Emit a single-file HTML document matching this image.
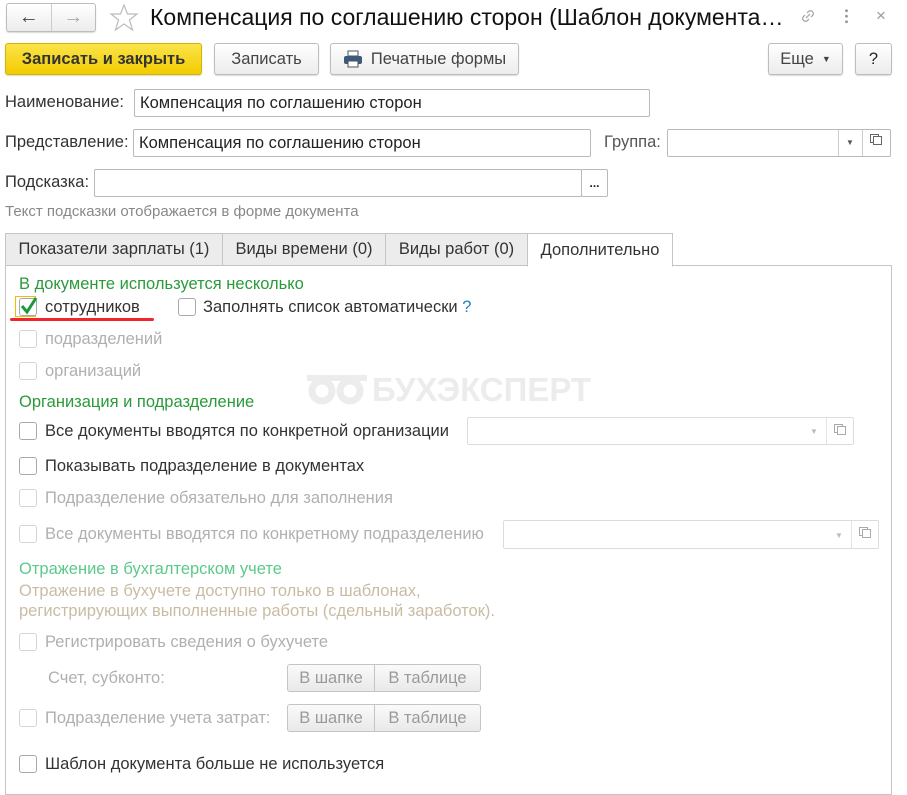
<!DOCTYPE html>
<html><head><meta charset="utf-8"><style>
*{box-sizing:border-box;margin:0;padding:0}
body{width:907px;height:784px;background:#fff;font-family:"Liberation Sans",Arial,sans-serif;font-size:16.5px;color:#333;position:relative;overflow:hidden}
.a{position:absolute;white-space:nowrap;line-height:18px}
.btn{position:absolute;border:1px solid #bdbdbd;border-radius:3px;background:linear-gradient(#fff,#ececec);box-shadow:0 1px 1px rgba(0,0,0,.15);display:flex;align-items:center;justify-content:center;color:#444}
.inp{position:absolute;border:1px solid #b9b9b9;border-radius:2px;background:#fff;padding-left:5px;display:flex;align-items:center;color:#222}
.cb{position:absolute;width:18px;height:18px;border:1px solid #a9a9a9;border-radius:3px;background:#fff}
.cb.d{border-color:#d4d4d4}
.dis{color:#b0b0b0}
.g{color:#2a9a3a}
.tab{position:absolute;top:233px;height:33px;border:1px solid #c4c4c4;background:#ececec;display:flex;align-items:center;justify-content:center;color:#333}
.seg{position:absolute;height:28px;border:1px solid #c4c4c4;border-radius:3px;background:linear-gradient(#fafafa,#e9e9e9);display:flex;color:#9a9a9a}
.seg span{display:flex;align-items:center;justify-content:center}
</style></head><body>
<div class="btn" style="left:6px;top:3px;width:90px;height:29px;justify-content:flex-start">
<div style="width:44px;text-align:center;font-size:20px;color:#444;font-weight:bold">&#8592;</div>
<div style="width:1px;height:27px;background:#ccc"></div>
<div style="width:44px;text-align:center;font-size:20px;color:#aaa;font-weight:bold">&#8594;</div></div>
<svg class="a" style="left:109px;top:3px" width="30" height="29" viewBox="0 0 30 29"><polygon points="15,2 18.5,11 28,11 20.5,17 23.5,27 15,21 6.5,27 9.5,17 2,11 11.5,11" fill="none" stroke="#bbb" stroke-width="1.2"/></svg>
<div class="a" style="left:150px;top:5px;font-size:23px;line-height:24px;color:#111">Компенсация по соглашению сторон (Шаблон документа…</div>
<svg class="a" style="left:798px;top:6px" width="20" height="20" viewBox="0 0 20 20"><path d="M8 12l4-4M7 9l-2 2a3 3 0 004 4l2-2M13 11l2-2a3 3 0 00-4-4l-2 2" fill="none" stroke="#aaa" stroke-width="1.3"/></svg>
<div class="a" style="left:845px;top:8px;width:3px;height:16px;background:radial-gradient(circle,#999 1.3px,transparent 1.6px) 0 0/3px 5.5px"></div>
<div class="a" style="left:876px;top:7px;font-size:17px;color:#999">×</div>
<div class="btn" style="left:5px;top:43px;width:197px;height:32px;background:linear-gradient(#fbe34a,#f2cc00);border-color:#d6b300;font-weight:bold;color:#333">Записать и закрыть</div>
<div class="btn" style="left:214px;top:43px;width:105px;height:32px">Записать</div>
<div class="btn" style="left:330px;top:43px;width:189px;height:32px"><svg width="20" height="18" viewBox="0 0 20 18" style="margin-right:8px"><rect x="5" y="1" width="10" height="5" fill="#fff" stroke="#456" /><rect x="1" y="6" width="18" height="8" rx="2" fill="#3f5a78"/><rect x="5" y="11" width="10" height="6" fill="#fff" stroke="#456"/></svg>Печатные формы</div>
<div class="btn" style="left:768px;top:43px;width:75px;height:32px">Еще <span style="font-size:9px;margin-left:8px">▼</span></div>
<div class="btn" style="left:855px;top:43px;width:37px;height:32px;color:#222">?</div>
<div class="a" style="left:5px;top:93px">Наименование:</div>
<div class="inp" style="left:134px;top:89px;width:516px;height:28px">Компенсация по соглашению сторон</div>
<div class="a" style="left:5px;top:133px">Представление:</div>
<div class="inp" style="left:133px;top:129px;width:458px;height:28px">Компенсация по соглашению сторон</div>
<div class="a" style="left:604px;top:133px;color:#555">Группа:</div>
<div class="inp" style="left:667px;top:129px;width:224px;height:28px"></div>
<div class="a" style="left:838px;top:130px;width:1px;height:26px;background:#ccc"></div>
<div class="a" style="left:862px;top:130px;width:1px;height:26px;background:#ccc"></div>
<div class="a" style="left:846px;top:134px;font-size:8px;color:#555">▼</div>
<div class="a" style="left:870px;top:134px;width:9px;height:9px;border:1px solid #666"></div><div class="a" style="left:873px;top:136px;width:9px;height:9px;border:1px solid #666;background:#fff"></div>
<div class="a" style="left:5px;top:173px">Подсказка:</div>
<div class="inp" style="left:94px;top:169px;width:488px;height:28px"></div>
<div class="inp" style="left:581px;top:169px;width:27px;height:28px;padding:0;justify-content:center;font-weight:bold;font-size:12px">...</div>
<div class="a" style="left:5px;top:203px;font-size:15px;color:#888">Текст подсказки отображается в форме документа</div>
<div class="a" style="left:5px;top:265px;width:887px;height:530px;border:1px solid #c4c4c4"></div>
<div class="tab" style="left:5px;width:218px">Показатели зарплаты (1)</div>
<div class="tab" style="left:222px;width:164px">Виды времени (0)</div>
<div class="tab" style="left:385px;width:143px">Виды работ (0)</div>
<div class="tab" style="left:527px;width:146px;background:#fff;border-bottom-color:#fff;height:34px">Дополнительно</div>
<svg class="a" style="left:305px;top:374px" width="70" height="32" viewBox="0 0 70 32"><circle cx="17" cy="17" r="10" fill="none" stroke="#ececec" stroke-width="7"/><circle cx="45" cy="17" r="10" fill="none" stroke="#ececec" stroke-width="7"/><path d="M2 4h60" stroke="#ececec" stroke-width="6"/></svg>
<div class="a" style="left:372px;top:374px;font-size:33px;line-height:32px;font-weight:bold;color:#ececec">БУХЭКСПЕРТ</div>
<div class="a g" style="left:19px;top:275px">В документе используется несколько</div>
<div class="a" style="left:15px;top:296px;width:21px;height:21px;border:1px solid #f0c000"></div>
<div class="cb" style="left:19px;top:298px"></div>
<svg class="a" style="left:19px;top:296px" width="20" height="20" viewBox="0 0 20 20"><path d="M3 10l5 6 9-14" fill="none" stroke="#1a9a3a" stroke-width="3"/></svg>
<div class="a" style="left:45px;top:298px">сотрудников</div>
<div class="a" style="left:10px;top:318px;width:144px;height:3px;background:#f0262f;border-radius:2px"></div>
<div class="cb" style="left:178px;top:298px"></div>
<div class="a" style="left:203px;top:298px">Заполнять список автоматически <span style="color:#1b7fc9">?</span></div>
<div class="cb d" style="left:19px;top:330px"></div><div class="a dis" style="left:45px;top:330px">подразделений</div>
<div class="cb d" style="left:19px;top:362px"></div><div class="a dis" style="left:45px;top:362px">организаций</div>
<div class="a g" style="left:19px;top:393px">Организация и подразделение</div>
<div class="cb" style="left:19px;top:422px"></div><div class="a" style="left:45px;top:422px">Все документы вводятся по конкретной организации</div>
<div class="inp" style="left:467px;top:417px;width:387px;height:28px;border-color:#dcdcdc"></div>
<div class="a" style="left:826px;top:418px;width:1px;height:26px;background:#e4e4e4"></div>
<div class="a" style="left:810px;top:423px;font-size:8px;color:#bbb">▼</div>
<div class="a" style="left:834px;top:424px;width:9px;height:9px;border:1px solid #aaa"></div><div class="a" style="left:837px;top:426px;width:9px;height:9px;border:1px solid #aaa;background:#fff"></div>
<div class="cb" style="left:19px;top:457px"></div><div class="a" style="left:45px;top:457px">Показывать подразделение в документах</div>
<div class="cb d" style="left:19px;top:489px"></div><div class="a dis" style="left:45px;top:489px">Подразделение обязательно для заполнения</div>
<div class="cb d" style="left:19px;top:525px"></div><div class="a dis" style="left:45px;top:525px">Все документы вводятся по конкретному подразделению</div>
<div class="inp" style="left:503px;top:520px;width:376px;height:29px;border-color:#dcdcdc"></div>
<div class="a" style="left:851px;top:521px;width:1px;height:27px;background:#e4e4e4"></div>
<div class="a" style="left:835px;top:527px;font-size:8px;color:#bbb">▼</div>
<div class="a" style="left:859px;top:527px;width:9px;height:9px;border:1px solid #aaa"></div><div class="a" style="left:862px;top:529px;width:9px;height:9px;border:1px solid #aaa;background:#fff"></div>
<div class="a" style="left:19px;top:560px;color:#5cc98a">Отражение в бухгалтерском учете</div>
<div class="a" style="left:19px;top:581px;color:#c9bca3;line-height:20px">Отражение в бухучете доступно только в шаблонах,<br>регистрирующих выполненные работы (сдельный заработок).</div>
<div class="cb d" style="left:19px;top:633px"></div><div class="a dis" style="left:45px;top:633px">Регистрировать сведения о бухучете</div>
<div class="a dis" style="left:48px;top:669px">Счет, субконто:</div>
<div class="seg" style="left:287px;top:664px;width:194px"><span style="width:87px;border-right:1px solid #c4c4c4">В шапке</span><span style="flex:1">В таблице</span></div>
<div class="cb d" style="left:19px;top:709px"></div><div class="a dis" style="left:45px;top:709px">Подразделение учета затрат:</div>
<div class="seg" style="left:287px;top:704px;width:194px"><span style="width:87px;border-right:1px solid #c4c4c4">В шапке</span><span style="flex:1">В таблице</span></div>
<div class="cb" style="left:19px;top:755px"></div><div class="a" style="left:45px;top:755px">Шаблон документа больше не используется</div>
</body></html>
